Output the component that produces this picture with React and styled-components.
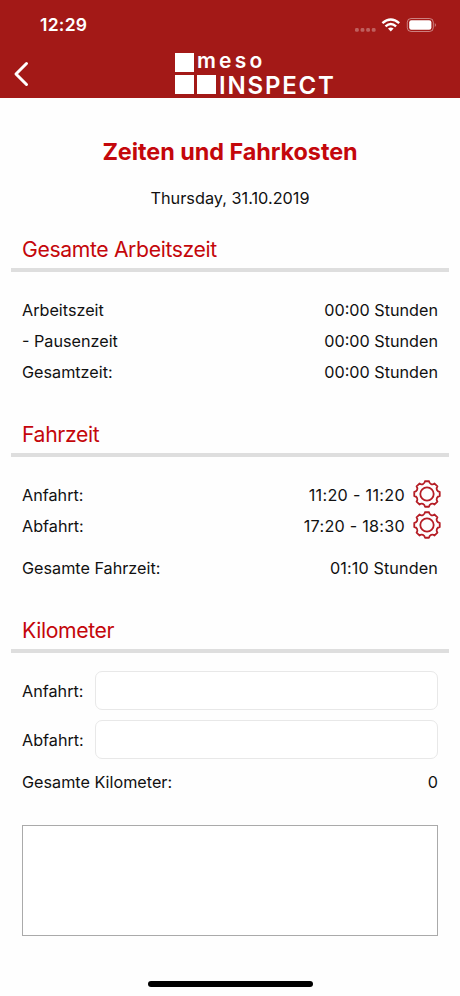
import styled, { createGlobalStyle } from "styled-components";

const GlobalStyle = createGlobalStyle`
  * { box-sizing: border-box; }
  body {
    margin: 0;
    background: #fefefe;
    color: #111;
    font-family: Inter, "Liberation Sans", sans-serif;
  }
`;

const Screen = styled.div`
  display: flex;
  flex-direction: column;
  width: 460px;
  height: 996px;
  overflow: hidden;
`;

const Header = styled.header`
  height: 98px;
  background: #a31917;
  color: #fff;
`;

const StatusBar = styled.div`
  display: flex;
  align-items: center;
  justify-content: space-between;
  height: 50px;
  padding: 0 23px 0 40px;
`;

const Clock = styled.span`
  font-size: 17.5px;
  font-weight: 600;
  line-height: 20px;
  letter-spacing: 0.25px;
`;

const NavBar = styled.div`
  display: flex;
  align-items: flex-start;
  height: 48px;
  padding: 2px 0 0 13px;
`;

const BackIcon = styled.svg`
  margin: 9px 146px 0 0;
`;

const Logo = styled.div`
  display: grid;
  grid-template-columns: 19px 19px auto;
  grid-template-rows: 19px 19px;
  gap: 3px;
  margin-top: 1px;
`;

const LogoSquare = styled.span`
  background: #fff;
`;

const LogoText = styled.span`
  grid-column: ${({ $wide }) => ($wide ? "2 / 4" : "3")};
  font-size: ${({ $wide }) => ($wide ? "21px" : "24px")};
  font-weight: 600;
  line-height: ${({ $wide }) => ($wide ? "16px" : "21px")};
  letter-spacing: ${({ $wide }) => ($wide ? "3.2px" : "1.8px")};
  white-space: nowrap;
`;

const Content = styled.main`
  display: flex;
  flex-direction: column;
  padding: 0 11px;
`;

const Title = styled.h1`
  margin: 39px 0 0;
  color: #c4070b;
  font-size: 23.4px;
  font-weight: 700;
  line-height: 30px;
  letter-spacing: -0.05px;
  text-align: center;
`;

const DateLine = styled.p`
  margin: 20px 0 0;
  font-size: 16.3px;
  line-height: 22px;
  text-align: center;
`;

const SectionTitle = styled.h2`
  height: 38px;
  margin: ${({ $top }) => $top}px 0 0;
  padding: 0 11px;
  border-bottom: 4px solid #dedede;
  color: #c4070b;
  font-size: 21.2px;
  font-weight: 400;
  line-height: 30px;
  letter-spacing: -0.37px;
`;

const Rows = styled.div`
  padding: ${({ $top }) => $top}px 11px 0;
`;

const Row = styled.div`
  display: flex;
  align-items: center;
  height: 31px;
  margin-top: ${({ $gap = 0 }) => $gap}px;
  font-size: 16.2px;
`;

const Value = styled.span`
  margin-left: auto;
  letter-spacing: ${({ $spacing = 0 }) => $spacing}px;
`;

const Gear = styled.svg`
  margin: -2px -2.5px 0 7.5px;
`;

const Field = styled(Row)`
  height: 39px;
`;

const FieldLabel = styled.label`
  width: 73px;
`;

const Input = styled.input`
  flex: 1;
  height: 39px;
  border: 1px solid #e8e8e8;
  border-radius: 7px;
  background: #fff;
`;

const Notes = styled.textarea`
  height: 111px;
  margin: 28px 11px 0;
  border: 1px solid #aaa;
  border-radius: 0;
  background: #fff;
  resize: none;
`;

const HomeIndicator = styled.div`
  width: 165px;
  height: 6px;
  margin: auto auto 9px;
  border-radius: 3px;
  background: #000;
`;

const gearPath = () => {
  const points = [];
  for (let i = 0; i < 8; i++) {
    const at = (deg, r) => {
      const a = ((i * 45 + deg - 90) * Math.PI) / 180;
      return `${(14 + r * Math.cos(a)).toFixed(2)} ${(14 + r * Math.sin(a)).toFixed(2)}`;
    };
    points.push(`${i ? "L" : "M"}${at(-9, 12.9)} L${at(9, 12.9)} C${at(13, 10.2)} ${at(32, 10.2)} ${at(36, 12.9)}`);
  }
  return points.join(" ") + "Z";
};

const GearIcon = () => (
  <Gear width="28" height="28" viewBox="0 0 28 28" fill="none" stroke="#b51d25" strokeWidth="1.8" strokeLinejoin="round">
    <path d={gearPath()} />
    <circle cx="14" cy="14" r="6.7" />
  </Gear>
);

const StatusIcons = () => (
  <svg width="83" height="20" viewBox="0 0 83 20" fill="none">
    <g fill="#fff" opacity=".3">
      <rect x="1" y="13" width="3.8" height="3.8" rx="1.4" />
      <rect x="6.6" y="13" width="3.8" height="3.8" rx="1.4" />
      <rect x="12.2" y="13" width="3.8" height="3.8" rx="1.4" />
      <rect x="17.8" y="13" width="3.8" height="3.8" rx="1.4" />
    </g>
    <g stroke="#fff" strokeWidth="2.4">
      <path d="M28.4 8.2Q36.8 .8 45.2 8.2" />
      <path d="M31.5 11.4Q36.8 6.6 42.1 11.4" />
    </g>
    <path fill="#fff" d="M34 13.6Q36.8 11.2 39.6 13.6L36.8 16.5Z" />
    <rect x="53.3" y="3.5" width="26" height="13" rx="3.8" stroke="#fff" strokeOpacity=".45" />
    <rect x="55.2" y="5.2" width="22.2" height="9.6" rx="2.2" fill="#fff" />
    <path d="M80.8 8Q83 10 80.8 12Z" fill="#fff" opacity=".5" />
  </svg>
);

export default function App() {
  return (
    <Screen>
      <GlobalStyle />
      <Header>
        <StatusBar>
          <Clock>12:29</Clock>
          <StatusIcons />
        </StatusBar>
        <NavBar>
          <BackIcon width="16" height="26" viewBox="0 0 16 26" fill="none" stroke="#fff" strokeWidth="3" strokeLinecap="round" strokeLinejoin="round">
            <path d="M13.5 2.5L3 13L13.5 23.5" />
          </BackIcon>
          <Logo>
            <LogoSquare />
            <LogoText $wide>meso</LogoText>
            <LogoSquare />
            <LogoSquare />
            <LogoText>INSPECT</LogoText>
          </Logo>
        </NavBar>
      </Header>
      <Content>
        <Title>Zeiten und Fahrkosten</Title>
        <DateLine>Thursday, 31.10.2019</DateLine>

        <SectionTitle $top={25}>Gesamte Arbeitszeit</SectionTitle>
        <Rows $top={22}>
          <Row>Arbeitszeit<Value>00:00 Stunden</Value></Row>
          <Row>- Pausenzeit<Value>00:00 Stunden</Value></Row>
          <Row>Gesamtzeit:<Value>00:00 Stunden</Value></Row>
        </Rows>

        <SectionTitle $top={32}>Fahrzeit</SectionTitle>
        <Rows $top={22}>
          <Row>Anfahrt:<Value $spacing={0.3}>11:20 - 11:20</Value><GearIcon /></Row>
          <Row>Abfahrt:<Value $spacing={0.25}>17:20 - 18:30</Value><GearIcon /></Row>
          <Row $gap={11}>Gesamte Fahrzeit:<Value $spacing={0.12}>01:10 Stunden</Value></Row>
        </Rows>

        <SectionTitle $top={32}>Kilometer</SectionTitle>
        <Rows $top={18}>
          <Field>
            <FieldLabel htmlFor="anfahrt">Anfahrt:</FieldLabel>
            <Input id="anfahrt" />
          </Field>
          <Field $gap={10}>
            <FieldLabel htmlFor="abfahrt">Abfahrt:</FieldLabel>
            <Input id="abfahrt" />
          </Field>
          <Row $gap={7}>Gesamte Kilometer:<Value>0</Value></Row>
        </Rows>
        <Notes />
      </Content>
      <HomeIndicator />
    </Screen>
  );
}
